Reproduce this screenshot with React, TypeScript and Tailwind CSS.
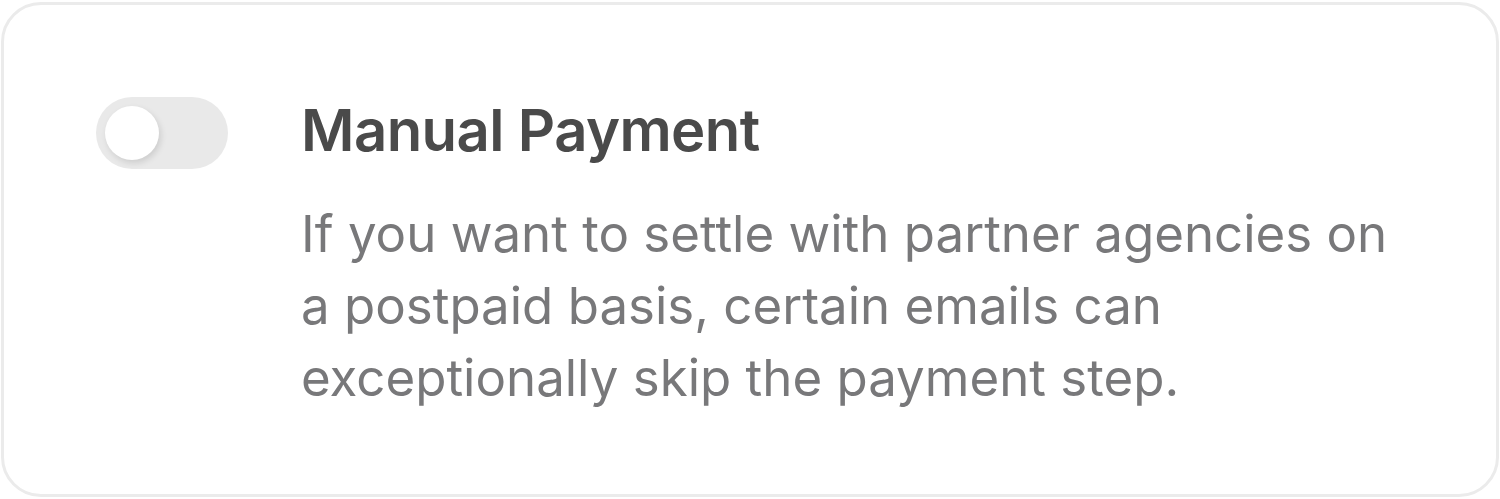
import { useState } from "react";

export default function App() {
  const [enabled, setEnabled] = useState(false);

  return (
    <div
      className="w-[1500px] h-[499px] bg-white px-[1px] pt-[2px] pb-[2px]"
      style={{ fontFamily: "Inter, 'Noto Sans', sans-serif" }}
    >
      <div className="h-full rounded-[40px] border-[3px] border-[#ebebeb] bg-white pl-[92px] pt-[92px] pr-[40px]">
        <div className="flex items-start gap-[73px]">
          {/* Toggle */}
          <button
            type="button"
            onClick={() => setEnabled(!enabled)}
            aria-pressed={enabled}
            className={`relative shrink-0 w-[132px] h-[72px] rounded-full transition-colors ${
              enabled ? "bg-[#4a4a4a]" : "bg-[#e9e9e9]"
            }`}
          >
            <span
              className={`absolute top-[9px] left-[9px] w-[54px] h-[54px] rounded-full bg-white shadow-[2px_3px_6px_rgba(0,0,0,0.12)] transition-transform ${
                enabled ? "translate-x-[60px]" : "translate-x-0"
              }`}
            />
          </button>

          {/* Text */}
          <div className="flex flex-col -mt-[3px]">
            <h2 className="text-[58px] leading-[72px] font-semibold text-[#4a4a4a] tracking-[-0.01em]">
              Manual Payment
            </h2>
            <p className="mt-[32px] text-[51px] leading-[72px] text-[#78787a] w-[1110px]">
              If you want to settle with partner agencies on a postpaid basis,
              certain emails can exceptionally skip the payment step.
            </p>
          </div>
        </div>
      </div>
    </div>
  );
}
